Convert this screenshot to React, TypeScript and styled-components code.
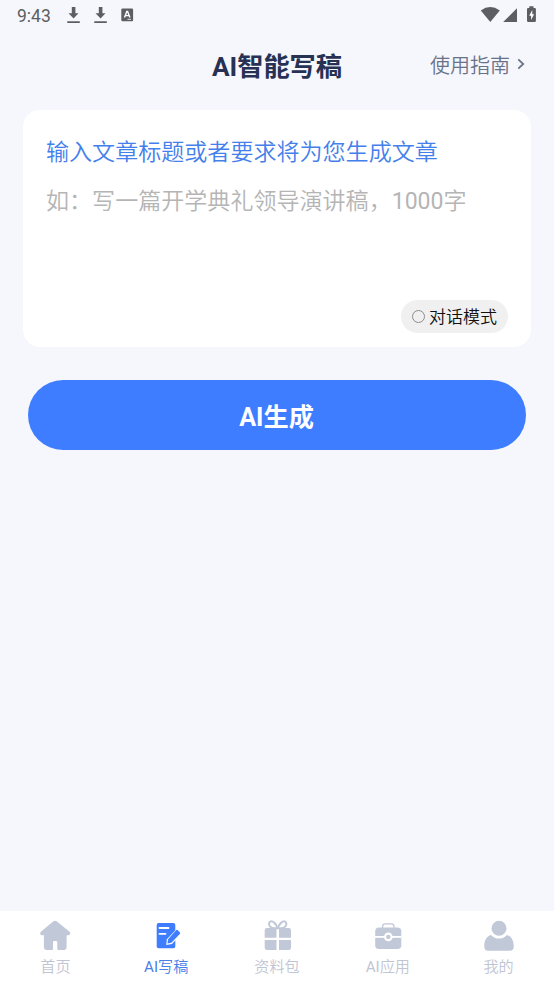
import React from "react";
import styled, { createGlobalStyle } from "styled-components";

const GlobalStyle = createGlobalStyle`
  * { box-sizing: border-box; }
  body {
    margin: 0;
    background: #f5f7fc;
    font-family: Roboto, "Noto Sans CJK SC", sans-serif;
  }
  button { font-family: inherit; border: 0; padding: 0; background: none; }
`;

const Screen = styled.div`
  width: 100%;
  height: 984px;
  display: flex;
  flex-direction: column;
  overflow: hidden;
  background: #f5f7fc;
`;

const StatusBar = styled.div`
  height: 30px;
  padding: 0 17px;
  display: flex;
  align-items: center;
  justify-content: space-between;
  color: #5d5e61;
`;

const Clock = styled.span`
  width: 48px;
  font-size: 17.5px;
  line-height: 30px;
  padding-top: 1px;
`;

const StatusGroup = styled.div`
  display: flex;
  align-items: center;
  height: 30px;
`;

const Header = styled.header`
  height: 80px;
  padding: 0 27px 0 27px;
  display: grid;
  grid-template-columns: 1fr auto 1fr;
  align-items: center;
`;

const Title = styled.h1`
  grid-column: 2;
  margin: 0;
  padding-bottom: 7px;
  font-size: 26.2px;
  line-height: 36px;
  font-weight: 700;
  color: #273154;
  white-space: nowrap;
`;

const GuideLink = styled.button`
  justify-self: end;
  display: flex;
  align-items: center;
  gap: 5px;
  padding-bottom: 9px;
  font-size: 20px;
  font-weight: 350;
  line-height: 28px;
  color: #6a728a;
`;

const Card = styled.section`
  height: 237px;
  margin: 0 23px;
  padding: 27px 23px 14px;
  display: flex;
  flex-direction: column;
  border-radius: 17px;
  background: #fff;
`;

const Prompt = styled.div`
  font-size: 23.05px;
  font-weight: 350;
  line-height: 32px;
  color: #4480eb;
  white-space: nowrap;
`;

const Placeholder = styled.div`
  margin-top: 17px;
  font-size: 23.05px;
  font-weight: 350;
  line-height: 32px;
  color: #b5b5b5;
  white-space: nowrap;
`;

const Latin = styled.span`
  font-weight: 400;
`;

const ModeChip = styled.button`
  align-self: flex-end;
  margin-top: auto;
  width: 107px;
  height: 33px;
  display: flex;
  align-items: center;
  justify-content: center;
  gap: 4px;
  border-radius: 17px;
  background: #f0f0f0;
  color: #111;
  font-size: 17px;
  font-weight: 350;
  line-height: 24px;
`;

const Radio = styled.span`
  width: 13px;
  height: 13px;
  border: 1px solid #8c8c8c;
  border-radius: 50%;
`;

const GenerateButton = styled.button`
  height: 70px;
  margin: 33px 28px 0;
  padding-right: 1px;
  border-radius: 35px;
  background: #3e7dff;
  color: #fff;
  font-size: 25.2px;
  font-weight: 700;
`;

const TabBar = styled.nav`
  height: 73px;
  margin-top: auto;
  display: grid;
  grid-template-columns: repeat(5, 1fr);
  background: #fff;
`;

const Tab = styled.button<{ $active?: boolean }>`
  display: flex;
  flex-direction: column;
  align-items: center;
  padding-top: 9px;
  font-size: 15.1px;
  font-weight: 350;
  line-height: 22px;
  color: ${(p) => (p.$active ? "#3e7dff" : "#c1c8d8")};
`;

const TabLabel = styled.span<{ $active?: boolean }>`
  margin-top: 4px;
  color: ${(p) => (p.$active ? "#4a80e6" : "#bfc5d3")};
  white-space: nowrap;
`;

const TabIcon = styled.svg`
  width: 32px;
  height: 32px;
  flex: none;
  fill: currentColor;
`;

const DownloadIcon = () => (
  <svg width="27" height="30" viewBox="0 0 27 30" fill="currentColor">
    <path d="M6.8 7h3.6v6.2h3.1L8.6 18.6l-5.1-5.4h3.3zM2.3 21.2h12.500v1.700H2.300z" />
  </svg>
);

const HomeIcon = () => (
  <TabIcon viewBox="0 0 32 32">
    <path d="M14.2 1.500q1.900-1.500 3.800 0L30.300 11.600q1.400 1.300.8 2.600-.5 1-2 1H27.600V27.600q0 2.400-2.400 2.400H19.300q-1 0-1-1v-6.500q0-1.400-1.400-1.400h-1.500q-1.400 0-1.400 1.400v6.500q0 1-1 1H7.300q-2.400 0-2.400-2.400V15.200H3.300q-1.500 0-2-1-.6-1.300.8-2.600z" />
  </TabIcon>
);

const WriteIcon = () => (
  <TabIcon viewBox="0 0 32 32">
    <path d="M8.700 3H23.300q2 0 2 2V26.300q0 2-2 2H8.700q-2 0-2-2V5q0-2 2-2z" />
    <path d="M9.500 8h9M9.500 13.800h6" stroke="#fff" strokeWidth="1.800" strokeLinecap="round" />
    <path d="M26.800 8.800L16.900 19.200L16.200 25L22 23.900L31.600 13.500z" fill="#fff" />
    <path d="M26 10.300q.9-.9 1.800 0l2 1.900q.9.900 0 1.800L21.400 22.700L17.500 23.500L18.100 19.300z" />
  </TabIcon>
);

const GiftIcon = () => (
  <TabIcon viewBox="0 0 32 32">
    <path d="M6 8h9.500v9.800H3.700v-7.500Q3.700 8 6 8zM18 8h9.700q2.300 0 2.300 2.300v7.500H18zM3.700 20h11.800v10H6q-2.300 0-2.300-2.300zM18 20h12v7.700q0 2.300-2.300 2.300H18z" />
    <path d="M16.700 8.300C14.900 3.200 11.500.5 9.300 1.600c-2 1.200-1.500 4.900 1.200 6 2 .8 4.500.7 6.200.7zm0 0C18.500 3.200 21.900.5 24.100 1.600c2 1.200 1.500 4.900-1.200 6-2 .8-4.500.7-6.200.7z" fill="#fff" stroke="currentColor" strokeWidth="2" />
  </TabIcon>
);

const CaseIcon = () => (
  <TabIcon viewBox="0 0 32 32">
    <path d="M10.600 8V6.600q0-2.800 2.800-2.800h5.800q2.800 0 2.800 2.800V8" fill="none" stroke="currentColor" strokeWidth="1.300" />
    <path d="M7 7.500H25.500Q29.300 7.500 29.300 11.300V25.200Q29.300 29 25.500 29H7Q3.200 29 3.200 25.200V11.300Q3.200 7.500 7 7.500z" />
    <path d="M3 16.900H29.500" stroke="#fff" strokeWidth="1.800" />
    <circle cx="16.300" cy="16.900" r="4.300" fill="#fff" />
    <circle cx="16.300" cy="16.900" r="2.200" />
  </TabIcon>
);

const UserIcon = () => (
  <TabIcon viewBox="0 0 32 32">
    <circle cx="16" cy="8.200" r="7.500" />
    <path d="M8 14.900Q11.200 18.600 16 18.600T24 14.900C28.300 16.200 30.700 20.400 30.700 25.600v1.100q0 4-4 4H5.300q-4 0-4-4v-1.100C1.300 20.400 3.700 16.200 8 14.900z" />
  </TabIcon>
);

const tabs = [
  { latin: "", label: "首页", Icon: HomeIcon },
  { latin: "AI", label: "写稿", Icon: WriteIcon, active: true },
  { latin: "", label: "资料包", Icon: GiftIcon },
  { latin: "AI", label: "应用", Icon: CaseIcon },
  { latin: "", label: "我的", Icon: UserIcon },
];

export default function App() {
  return (
    <Screen>
      <GlobalStyle />
      <StatusBar>
        <StatusGroup>
          <Clock>9:43</Clock>
          <DownloadIcon />
          <DownloadIcon />
          <svg width="16" height="30" viewBox="0 0 16 30">
            <rect x="2.300" y="8.500" width="11.800" height="12.800" rx="1.200" fill="currentColor" />
            <path d="M5.500 17.500L7.800 11.500H8.600L10.900 17.500M6.500 15.600H9.900" fill="none" stroke="#fff" strokeWidth="1.400" />
            <path d="M8.500 19.300H12" stroke="#fff" strokeWidth=".8" />
          </svg>
        </StatusGroup>
        <StatusGroup>
          <svg width="57" height="30" viewBox="480 0 57 30" fill="currentColor">
            <path d="M480.800 10.400Q490.200 3.600 499.800 10.400L490.300 22z" />
            <path d="M517 8.200V22H503.200z" />
            <path d="M529.300 6.300h4.200v1.600h1.200q1.200 0 1.200 1.200V20.800q0 1.200-1.200 1.200H528.200q-1.200 0-1.200-1.200V9.100q0-1.200 1.200-1.200h1.100z" />
            <path d="M532.300 10L529.200 15.700H531.100V20L534.100 14.200H532.300z" fill="#fff" />
          </svg>
        </StatusGroup>
      </StatusBar>
      <Header>
        <Title>AI智能写稿</Title>
        <GuideLink>
          使用指南
          <svg width="12" height="16" viewBox="0 0 12 16" fill="none" stroke="currentColor" strokeWidth="1.800">
            <path d="M3.300 1.300L8.200 6L3.300 10.700" />
          </svg>
        </GuideLink>
      </Header>
      <Card>
        <Prompt>输入文章标题或者要求将为您生成文章</Prompt>
        <Placeholder>
          如：写一篇开学典礼领导演讲稿，<Latin>1000</Latin>字
        </Placeholder>
        <ModeChip>
          <Radio />
          对话模式
        </ModeChip>
      </Card>
      <GenerateButton>AI生成</GenerateButton>
      <TabBar>
        {tabs.map(({ latin, label, Icon, active }) => (
          <Tab key={label} $active={active}>
            <Icon />
            <TabLabel $active={active}>
              {latin && <Latin>{latin}</Latin>}
              {label}
            </TabLabel>
          </Tab>
        ))}
      </TabBar>
    </Screen>
  );
}
